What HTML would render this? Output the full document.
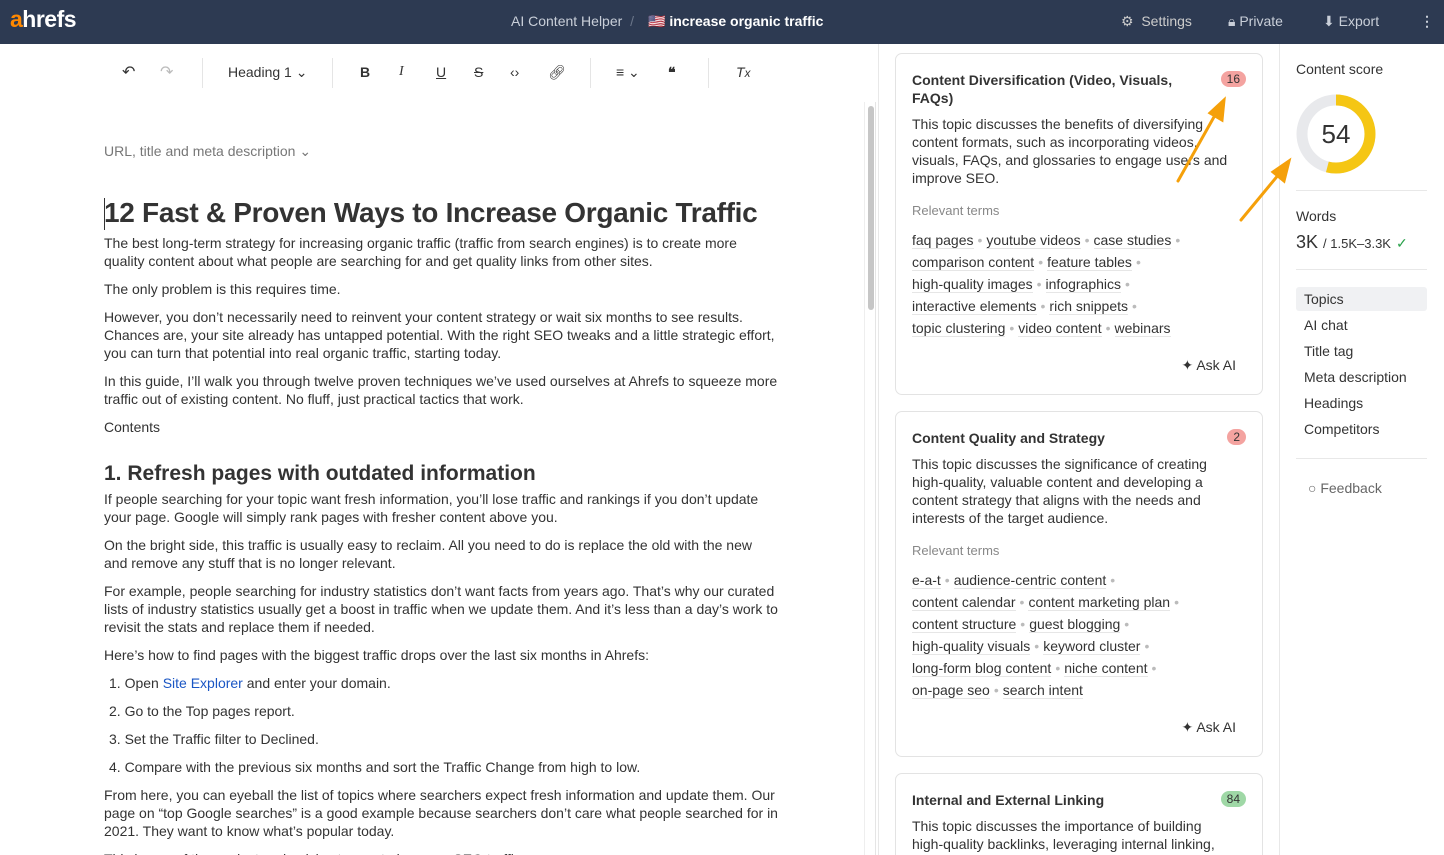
<!DOCTYPE html>
<html><head><meta charset="utf-8"><style>
*{box-sizing:border-box;margin:0;padding:0}
html,body{width:1444px;height:855px;overflow:hidden}
body{font-family:"Liberation Sans",Arial,sans-serif;color:#333;background:#fff;position:relative}
.hdr{position:absolute;left:0;top:0;width:1444px;height:44px;background:#2d3a52;color:#c9cfd9;font-size:14px}
.hdr span{position:absolute;top:13px}
.logo{position:absolute;left:10px;top:6px;font-size:23px;font-weight:bold;color:#fff;letter-spacing:-0.5px}
.logo b{color:#ff8800}
.tb{position:absolute;top:64px;font-size:14px;color:#333}
.sep{position:absolute;top:58px;width:1px;height:30px;background:#e5e5e5}
.ed{position:absolute;left:104px;width:675px;font-size:14px;line-height:18px;color:#333}
.ed p{position:absolute;left:0;width:675px}
h1{position:absolute;left:104px;top:197px;font-size:28px;font-weight:bold;color:#333;white-space:nowrap;letter-spacing:-0.3px}
h2{position:absolute;left:104px;top:462px;font-size:21px;font-weight:bold;color:#333}
.scroll{position:absolute;left:864px;top:102px;width:12px;height:753px;border-left:1px solid #eee;border-right:1px solid #e5e5e5}
.scroll i{position:absolute;left:3px;top:4px;width:6px;height:204px;background:#c6c6c6;border-radius:3px}
.card{position:absolute;left:895px;width:368px;border:1px solid #e3e3e3;border-radius:7px;background:#fff}
.card .t{position:absolute;left:16px;font-size:14px;font-weight:bold;color:#333;line-height:18px;width:290px}
.card .d{position:absolute;left:16px;font-size:14px;line-height:18px;width:318px;color:#333}
.card .r{position:absolute;left:16px;font-size:13px;color:#888}
.card .k{position:absolute;left:16px;font-size:14px;line-height:22px;width:340px;color:#333}
.k u{text-decoration:none;border-bottom:1px solid #e6e6e6}
.k em{font-style:normal;color:#bbb;margin:0 4px}
.badge{position:absolute;right:16px;font-size:12px;padding:1px 6px;border-radius:9px;background:#f4a3a0;color:#333}
.ask{position:absolute;right:26px;font-size:14px;color:#333}
.side{position:absolute;left:1279px;top:44px;width:1px;height:811px;background:#e8e8e8}
.panel{position:absolute;left:878px;top:44px;width:1px;height:811px;background:#e8e8e8}
.nav{position:absolute;left:1304px;font-size:14px;color:#333}
</style></head><body>
<div class="hdr">
<div class="logo"><b>a</b>hrefs</div>
<span style="left:511px">AI Content Helper&nbsp;&nbsp;<span style="position:static;color:#6b768a">/</span></span>
<span style="left:648px;color:#fff;font-weight:bold">🇺🇸 increase organic traffic</span>
<span style="left:1121px;color:#ccc">⚙&nbsp; Settings</span>
<span style="left:1228px">🔒︎ Private</span>
<span style="left:1323px">⬇ Export</span>
<span style="left:1420px;font-weight:bold">⋮</span>
</div>
<span class="tb" style="left:122px;font-size:16px;top:62px">↶</span>
<span class="tb" style="left:160px;font-size:16px;color:#bbb;top:62px">↷</span>
<div class="sep" style="left:202px"></div>
<span class="tb" style="left:228px">Heading 1 ⌄</span>
<div class="sep" style="left:332px"></div>
<span class="tb" style="left:360px;font-weight:bold">B</span>
<span class="tb" style="left:399px;font-style:italic;font-family:'Liberation Serif'">I</span>
<span class="tb" style="left:436px;text-decoration:underline">U</span>
<span class="tb" style="left:474px;text-decoration:line-through">S</span>
<span class="tb" style="left:510px">‹›</span>
<span class="tb" style="left:548px">🔗︎</span>
<div class="sep" style="left:590px"></div>
<span class="tb" style="left:616px">≡ ⌄</span>
<span class="tb" style="left:668px;font-weight:bold">❝</span>
<div class="sep" style="left:708px"></div>
<span class="tb" style="left:736px;font-style:italic">T<small>x</small></span>
<div style="position:absolute;left:104px;top:143px;font-size:14px;color:#777">URL, title and meta description ⌄</div>
<div style="position:absolute;left:104px;top:198px;width:1px;height:32px;background:#333"></div>
<h1>12 Fast &amp; Proven Ways to Increase Organic Traffic</h1>
<div class="ed">
<p style="top:234px">The best long-term strategy for increasing organic traffic (traffic from search engines) is to create more quality content about what people are searching for and get quality links from other sites.</p>
<p style="top:280px">The only problem is this requires time.</p>
<p style="top:308px">However, you don’t necessarily need to reinvent your content strategy or wait six months to see results. Chances are, your site already has untapped potential. With the right SEO tweaks and a little strategic effort, you can turn that potential into real organic traffic, starting today.</p>
<p style="top:372px">In this guide, I’ll walk you through twelve proven techniques we’ve used ourselves at Ahrefs to squeeze more traffic out of existing content. No fluff, just practical tactics that work.</p>
<p style="top:418px">Contents</p>
<p style="top:490px">If people searching for your topic want fresh information, you’ll lose traffic and rankings if you don’t update your page. Google will simply rank pages with fresher content above you.</p>
<p style="top:536px">On the bright side, this traffic is usually easy to reclaim. All you need to do is replace the old with the new and remove any stuff that is no longer relevant.</p>
<p style="top:582px">For example, people searching for industry statistics don’t want facts from years ago. That’s why our curated lists of industry statistics usually get a boost in traffic when we update them. And it’s less than a day’s work to revisit the stats and replace them if needed.</p>
<p style="top:646px">Here’s how to find pages with the biggest traffic drops over the last six months in Ahrefs:</p>
<p style="top:674px;left:5px">1. Open <span style="color:#1a56c4">Site Explorer</span> and enter your domain.</p>
<p style="top:702px;left:5px">2. Go to the Top pages report.</p>
<p style="top:730px;left:5px">3. Set the Traffic filter to Declined.</p>
<p style="top:758px;left:5px">4. Compare with the previous six months and sort the Traffic Change from high to low.</p>
<p style="top:786px">From here, you can eyeball the list of topics where searchers expect fresh information and update them. Our page on “top Google searches” is a good example because searchers don’t care what people searched for in 2021. They want to know what’s popular today.</p>
<p style="top:850px">This is one of the easiest and quickest ways to increase SEO traffic</p>
</div>
<h2>1. Refresh pages with outdated information</h2>
<div class="scroll"><i></i></div>
<div class="panel"></div>
<div class="card" style="top:53px;height:342px">
<div class="t" style="top:17px">Content Diversification (Video, Visuals, FAQs)</div>
<div class="badge" style="top:17px">16</div>
<div class="d" style="top:61px;width:330px">This topic discusses the benefits of diversifying content formats, such as incorporating videos, visuals, FAQs, and glossaries to engage users and improve SEO.</div>
<div class="r" style="top:149px">Relevant terms</div>
<div class="k" style="top:175px"><u>faq pages</u><em>•</em><u>youtube videos</u><em>•</em><u>case studies</u><em>•</em><br><u>comparison content</u><em>•</em><u>feature tables</u><em>•</em><br><u>high-quality images</u><em>•</em><u>infographics</u><em>•</em><br><u>interactive elements</u><em>•</em><u>rich snippets</u><em>•</em><br><u>topic clustering</u><em>•</em><u>video content</u><em>•</em><u>webinars</u></div>
<div class="ask" style="top:303px">✦ Ask AI</div>
</div>
<div class="card" style="top:411px;height:346px">
<div class="t" style="top:17px">Content Quality and Strategy</div>
<div class="badge" style="top:17px">2</div>
<div class="d" style="top:43px">This topic discusses the significance of creating high-quality, valuable content and developing a content strategy that aligns with the needs and interests of the target audience.</div>
<div class="r" style="top:131px">Relevant terms</div>
<div class="k" style="top:157px"><u>e-a-t</u><em>•</em><u>audience-centric content</u><em>•</em><br><u>content calendar</u><em>•</em><u>content marketing plan</u><em>•</em><br><u>content structure</u><em>•</em><u>guest blogging</u><em>•</em><br><u>high-quality visuals</u><em>•</em><u>keyword cluster</u><em>•</em><br><u>long-form blog content</u><em>•</em><u>niche content</u><em>•</em><br><u>on-page seo</u><em>•</em><u>search intent</u></div>
<div class="ask" style="top:307px">✦ Ask AI</div>
</div>
<div class="card" style="top:773px;height:100px">
<div class="t" style="top:17px">Internal and External Linking</div>
<div class="badge" style="top:17px;background:#9fd8a6">84</div>
<div class="d" style="top:43px">This topic discusses the importance of building high-quality backlinks, leveraging internal linking,</div>
</div>
<div class="side"></div>
<div style="position:absolute;left:1296px;top:61px;font-size:14px">Content score</div>
<svg style="position:absolute;left:1296px;top:94px" width="80" height="80" viewBox="0 0 80 80">
<circle cx="40" cy="40" r="34" fill="none" stroke="#e8e9ec" stroke-width="11"/>
<circle cx="40" cy="40" r="34" fill="none" stroke="#f5c614" stroke-width="11" stroke-dasharray="115.4 213.6" transform="rotate(-90 40 40)"/>
<text x="40" y="49" text-anchor="middle" font-family="Liberation Sans" font-size="26" fill="#333">54</text>
</svg>
<div style="position:absolute;left:1296px;top:190px;width:131px;height:1px;background:#e8e8e8"></div>
<div style="position:absolute;left:1296px;top:208px;font-size:14px">Words</div>
<div style="position:absolute;left:1296px;top:232px;font-size:18px">3K <span style="font-size:13px">/ 1.5K–3.3K</span> <span style="color:#2aa14b;font-size:14px">✓</span></div>
<div style="position:absolute;left:1296px;top:269px;width:131px;height:1px;background:#e8e8e8"></div>
<div style="position:absolute;left:1296px;top:287px;width:131px;height:24px;background:#f0f1f3;border-radius:3px"></div>
<div class="nav" style="top:291px">Topics</div>
<div class="nav" style="top:317px">AI chat</div>
<div class="nav" style="top:343px">Title tag</div>
<div class="nav" style="top:369px">Meta description</div>
<div class="nav" style="top:395px">Headings</div>
<div class="nav" style="top:421px">Competitors</div>
<div style="position:absolute;left:1296px;top:458px;width:131px;height:1px;background:#e8e8e8"></div>
<div class="nav" style="top:480px;left:1308px;color:#666">○ Feedback</div>
<svg style="position:absolute;left:0;top:0" width="1444" height="855">
<g stroke="#f5a00a" stroke-width="3" fill="#f5a00a" stroke-linecap="round">
<line x1="1178" y1="181" x2="1219" y2="108"/><polygon points="1224,100 1222,120 1210,113"/>
<line x1="1241" y1="220" x2="1284" y2="168"/><polygon points="1289,161 1284,181 1273,172"/>
</g></svg>
</body></html>
